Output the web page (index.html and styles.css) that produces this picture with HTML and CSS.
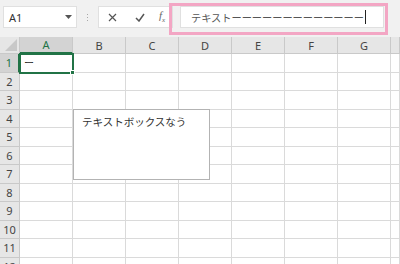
FILE: index.html
```html
<!DOCTYPE html>
<html lang="ja">
<head>
    <meta charset="UTF-8">
    <meta name="viewport" content="width=device-width, initial-scale=1.0">
    <link rel="stylesheet" href="styles.css">
    <title>Excel</title>
</head>
<body>
    <div class="toolbar">
        <div class="namebox">
            <span>A1</span>
            <svg class="caret" width="7" height="4" viewBox="0 0 7 4"><path d="M0 0h7L3.5 4z" fill="#555"/></svg>
        </div>
        <div class="grip"><i></i><i></i><i></i></div>
        <div class="fxbuttons">
            <svg width="9" height="9" viewBox="0 0 9 9"><path d="M1 1l7 7M8 1L1 8" stroke="#555" stroke-width="1.2" fill="none"/></svg>
            <svg width="10" height="9" viewBox="0 0 10 9"><path d="M1 5l3 3 5-7" stroke="#555" stroke-width="1.5" fill="none"/></svg>
            <span class="fx">f<sub>x</sub></span>
        </div>
        <div class="formula">テキストーーーーーーーーーーーーー<span class="cursor"></span></div>
        <div class="highlight"></div>
    </div>

    <div class="sheet">
        <div class="corner"><svg width="12" height="12" viewBox="0 0 12 12"><path d="M12 0V12H0z" fill="#c8c8c8"/></svg></div>
        <div class="colhead active">A</div>
        <div class="colhead">B</div>
        <div class="colhead">C</div>
        <div class="colhead">D</div>
        <div class="colhead">E</div>
        <div class="colhead">F</div>
        <div class="colhead">G</div>
        <div class="colhead"></div>
    </div>

    <div class="textbox">テキストボックスなう</div>

    <script>
        // build rows 1-12
        var sheet = document.querySelector('.sheet');
        for (var r = 1; r <= 12; r++) {
            var head = document.createElement('div');
            head.className = 'rowhead' + (r === 1 ? ' active' : '');
            head.textContent = r;
            sheet.appendChild(head);
            for (var c = 0; c < 8; c++) {
                var cell = document.createElement('div');
                cell.className = 'cell';
                if (r === 1 && c === 0) {
                    cell.className = 'cell selected';
                    cell.innerHTML = 'ー<span class="handle"></span>';
                }
                sheet.appendChild(cell);
            }
        }
    </script>
</body>
</html>
```

FILE: styles.css
```css
body {
    margin: 0;
    background-color: #fff;
    font-family: "Noto Sans", "Noto Sans CJK JP", sans-serif;
    overflow: hidden;
}

.toolbar {
    position: relative;
    display: flex;
    align-items: center;
    height: 37px;
    padding: 6px 0 9px 3px;
    box-sizing: border-box;
    background-color: #f1f1f1;
}

.namebox {
    display: flex;
    align-items: center;
    justify-content: space-between;
    width: 74px;
    height: 22px;
    padding: 0 4px 0 5px;
    box-sizing: border-box;
    background-color: #fff;
    border: 1px solid #e0e0e0;
    font-size: 11px;
    color: #333;
}

.grip {
    display: flex;
    flex-direction: column;
    gap: 2px;
    margin: 0 10px 0 10px;
}

.grip i {
    display: block;
    width: 1px;
    height: 1px;
    background-color: #a8a8a8;
}

.fxbuttons {
    display: flex;
    align-items: center;
    gap: 18px;
    width: 75px;
    height: 22px;
    padding-left: 9px;
    box-sizing: border-box;
    background-color: #fff;
    border: 1px solid #e0e0e0;
}

.fx {
    margin-left: -4px;
    font-family: "Liberation Serif", serif;
    font-style: italic;
    font-size: 11px;
    color: #666;
}

.fx sub {
    font-size: 7px;
}

.formula {
    display: flex;
    align-items: center;
    width: 204px;
    height: 22px;
    margin-left: 7px;
    padding-left: 10px;
    box-sizing: border-box;
    background-color: #fff;
    border: 1px solid #e0e0e0;
    font-family: "Noto Sans CJK JP", sans-serif;
    font-size: 10.2px;
    color: #555;
    white-space: nowrap;
}

.cursor {
    display: inline-block;
    width: 1px;
    height: 14px;
    margin-left: 1px;
    background-color: #222;
}

.highlight {
    position: absolute;
    left: 169px;
    top: 3px;
    width: 219px;
    height: 32px;
    box-sizing: border-box;
    border: 3px solid #f3a6c4;
}

.sheet {
    display: grid;
    grid-template-columns: 20px repeat(7, 53px) 1fr;
    grid-template-rows: 17px;
    grid-auto-rows: 18.5px;
    font-size: 11px;
    color: #444;
}

.corner,
.colhead,
.rowhead {
    display: flex;
    align-items: center;
    justify-content: center;
    box-sizing: border-box;
    background-color: #e6e6e6;
    border-right: 1px solid #c9c9c9;
    border-bottom: 1px solid #c9c9c9;
}

.corner {
    align-items: flex-end;
    justify-content: flex-end;
    padding: 0 2px 2px 0;
}

.colhead.active {
    background-color: #d3d3d3;
    border-bottom: 2px solid #217346;
    color: #217346;
}

.rowhead.active {
    background-color: #d3d3d3;
    border-right: 2px solid #217346;
    color: #217346;
}

.cell {
    box-sizing: border-box;
    border-right: 1px solid #dadada;
    border-bottom: 1px solid #dadada;
}

.cell.selected {
    position: relative;
    padding: 1px 0 0 4px;
    font-family: "Noto Sans CJK JP", sans-serif;
    font-size: 10px;
    color: #222;
    outline: 2px solid #217346;
    outline-offset: -1px;
}

.handle {
    position: absolute;
    right: -3px;
    bottom: -3px;
    width: 5px;
    height: 5px;
    background-color: #217346;
    border: 1px solid #fff;
    box-sizing: border-box;
}

.textbox {
    position: absolute;
    left: 73px;
    top: 109px;
    width: 137px;
    height: 71px;
    box-sizing: border-box;
    padding: 4px 0 0 8px;
    background-color: #fff;
    border: 1px solid #b3b3b3;
    font-family: "Noto Sans CJK JP", sans-serif;
    font-size: 10.5px;
    color: #333;
}
```
